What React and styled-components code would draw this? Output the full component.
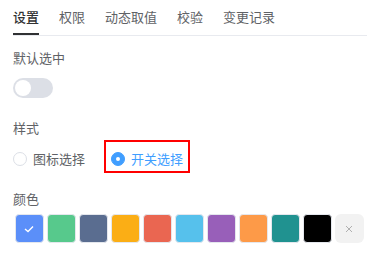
import React from "react";
import styled, { createGlobalStyle } from "styled-components";

const Global = createGlobalStyle`
  html, body { margin: 0; padding: 0; background: #fff; }
  body { font-family: "Noto Sans CJK SC", "Noto Sans", sans-serif; }
`;

const Page = styled.div`
  width: 367px;
  height: 263px;
  padding-left: 13px;
  box-sizing: border-box;
  overflow: hidden;
`;

const Tabs = styled.div`
  display: flex;
  gap: 20px;
  height: 36px;
  border-bottom: 1px solid #e8eaef;
  box-sizing: border-box;
`;

const Tab = styled.div`
  font-size: 13px;
  line-height: 33px;
  height: 35px;
  box-sizing: border-box;
  color: ${(p) => (p.$active ? "#303133" : "#606266")};
  font-weight: ${(p) => (p.$active ? 500 : 400)};
  border-bottom: 2px solid ${(p) => (p.$active ? "#303133" : "transparent")};
  margin-bottom: -1px;
`;

const Label = styled.div`
  font-size: 13px;
  line-height: 18px;
  color: #606266;
  margin-top: ${(p) => p.$top}px;
`;

const Switch = styled.div`
  width: 40px;
  height: 20px;
  border-radius: 10px;
  background: #dcdfe6;
  margin-top: 11px;
  position: relative;
`;

const Knob = styled.span`
  position: absolute;
  left: 2px;
  top: 2px;
  width: 16px;
  height: 16px;
  border-radius: 50%;
  background: #fff;
`;

const RadioGroup = styled.div`
  display: flex;
  align-items: center;
  gap: 19px;
  margin-top: 3px;
`;

const RadioItem = styled.label`
  display: flex;
  align-items: center;
  gap: 6px;
  font-size: 13px;
  line-height: 19px;
  color: ${(p) => (p.$checked ? "#409eff" : "#606266")};
  ${(p) =>
    p.$highlight
      ? `border: 2px solid #ff0000; padding: 7px 5px 3px 5px;`
      : `padding-top: 4px;`}
`;

const RadioDot = styled.span`
  width: 14px;
  height: 14px;
  box-sizing: border-box;
  border-radius: 50%;
  border: 1px solid ${(p) => (p.$checked ? "#409eff" : "#dcdfe6")};
  background: ${(p) => (p.$checked ? "#409eff" : "#fff")};
  display: flex;
  align-items: center;
  justify-content: center;
  &::after {
    content: "";
    width: 4px;
    height: 4px;
    border-radius: 50%;
    background: #fff;
    display: ${(p) => (p.$checked ? "block" : "none")};
  }
`;

const Swatches = styled.div`
  display: flex;
  gap: 3px;
  margin-top: 6px;
  padding-left: 1.5px;
`;

const Swatch = styled.div`
  width: 29px;
  height: 29px;
  box-sizing: border-box;
  border-radius: 4px;
  border: 1px solid #e4e7ed;
  background: ${(p) => p.$color};
  display: flex;
  align-items: center;
  justify-content: center;
`;

const Clear = styled.div`
  width: 29px;
  height: 29px;
  border-radius: 6px;
  background: #f2f2f2;
  display: flex;
  align-items: center;
  justify-content: center;
`;

const colors = [
  "#5b8ff9",
  "#57c98c",
  "#5a6d90",
  "#fbae15",
  "#ea6651",
  "#56c1ec",
  "#985fb9",
  "#fd9a48",
  "#209290",
  "#000000",
];

export default function App() {
  return (
    <>
      <Global />
      <Page>
        <Tabs>
          <Tab $active>设置</Tab>
          <Tab>权限</Tab>
          <Tab>动态取值</Tab>
          <Tab>校验</Tab>
          <Tab>变更记录</Tab>
        </Tabs>
        <Label $top={13}>默认选中</Label>
        <Switch>
          <Knob />
        </Switch>
        <Label $top={21}>样式</Label>
        <RadioGroup>
          <RadioItem>
            <RadioDot />
            图标选择
          </RadioItem>
          <RadioItem $checked $highlight>
            <RadioDot $checked />
            开关选择
          </RadioItem>
        </RadioGroup>
        <Label $top={17}>颜色</Label>
        <Swatches>
          {colors.map((c, i) => (
            <Swatch key={c} $color={c}>
              {i === 0 && (
                <svg width="10" height="8" viewBox="0 0 10 8">
                  <path d="M1 4 L4 6.5 L9 1.5" stroke="#fff" strokeWidth="1.4" fill="none" />
                </svg>
              )}
            </Swatch>
          ))}
          <Clear>
            <svg width="8" height="8" viewBox="0 0 8 8">
              <path d="M1 1 L7 7 M7 1 L1 7" stroke="#b0b0b0" strokeWidth="1" />
            </svg>
          </Clear>
        </Swatches>
      </Page>
    </>
  );
}
